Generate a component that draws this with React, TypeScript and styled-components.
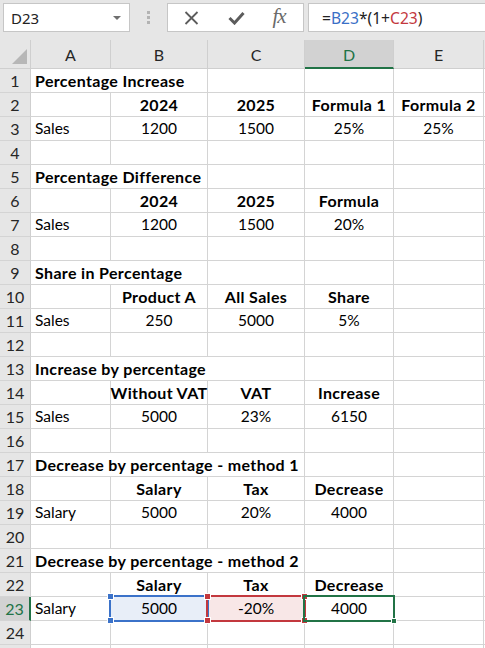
import React from 'react';
import styled, { createGlobalStyle, css } from 'styled-components';

const Global = createGlobalStyle`
  html, body { margin: 0; padding: 0; background: #fff; overflow: hidden; }
  body { font-family: Lato, "Liberation Sans", sans-serif; }
  #root { width: 485px; height: 648px; overflow: hidden; }
`;

const TopBar = styled.div`
  height: 40px;
  background: #e6e6e6;
  display: flex;
  align-items: flex-start;
  padding: 3px 0 0 3px;
  box-sizing: border-box;
`;

const NameBox = styled.div`
  width: 127px;
  height: 29px;
  box-sizing: border-box;
  background: #fff;
  border: 1px solid #c6c6c6;
  display: flex;
  align-items: center;
  padding: 0 8px 0 7px;
  font-family: "Noto Sans", "Open Sans", sans-serif;
  font-size: 15px;
  color: #222;
`;

const DropArrow = styled.span`
  margin-left: auto;
  width: 0;
  height: 0;
  border-left: 4px solid transparent;
  border-right: 4px solid transparent;
  border-top: 4px solid #6f6f6f;
`;

const Grip = styled.div`
  width: 37px;
  height: 29px;
  display: flex;
  flex-direction: column;
  align-items: center;
  justify-content: center;
  gap: 2px;
`;

const Dot = styled.span`
  width: 3px;
  height: 3px;
  background: #b3b3b3;
`;

const FxBox = styled.div`
  width: 137px;
  height: 29px;
  box-sizing: border-box;
  background: #fff;
  border: 1px solid #c6c6c6;
  display: flex;
  align-items: center;
  padding-left: 15px;
`;

const IconSlot = styled.div<{ $w: number }>`
  width: ${p => p.$w}px;
  height: 27px;
  display: flex;
  align-items: center;
  justify-content: center;
`;

const FxText = styled.span`
  font-family: "Liberation Serif", "DejaVu Serif", serif;
  font-style: italic;
  font-size: 21px;
  line-height: 1;
  color: #6a6a6a;
  letter-spacing: -1px;
  margin-top: -2px;
`;

const FormulaInput = styled.div`
  flex: 1;
  height: 29px;
  margin-left: 4px;
  box-sizing: border-box;
  background: #fff;
  border: 1px solid #c6c6c6;
  border-right: none;
  display: flex;
  align-items: center;
  padding-left: 13px;
  font-family: "Noto Sans", "Open Sans", sans-serif;
  font-size: 15.6px;
  color: #222;
  white-space: pre;
`;

const Ref = styled.span<{ $c: string }>`
  color: ${p => p.$c};
`;

const Sheet = styled.div`
  display: grid;
  grid-template-columns: 31px 80px 97px 97px 89px 90px 1fr;
  grid-template-rows: 29px;
  grid-auto-rows: 24px;
  font-family: Lato, "Liberation Sans", sans-serif;
  font-size: 15px;
`;

const Corner = styled.div`
  background: #e6e6e6;
  border-right: 1px solid #cfcfcf;
  border-bottom: 1px solid #cfcfcf;
  display: flex;
  align-items: flex-end;
  justify-content: flex-end;
  padding: 0 3px 4px 0;
  box-sizing: border-box;
`;

const Triangle = styled.span`
  width: 0;
  height: 0;
  border-left: 15px solid transparent;
  border-bottom: 15px solid #b7b7b7;
`;

const ColHead = styled.div<{ $active?: boolean }>`
  background: ${p => (p.$active ? '#d2d2d2' : '#e6e6e6')};
  border-right: 1px solid #cfcfcf;
  border-bottom: ${p => (p.$active ? '2px solid #217346' : '1px solid #cfcfcf')};
  color: ${p => (p.$active ? '#217346' : '#262626')};
  box-sizing: border-box;
  display: flex;
  align-items: center;
  justify-content: center;
  padding-top: 1px;
  font-size: 16px;
`;

const RowHead = styled.div<{ $active?: boolean }>`
  background: ${p => (p.$active ? '#d2d2d2' : '#e6e6e6')};
  border-right: ${p => (p.$active ? '2px solid #217346' : '1px solid #cfcfcf')};
  border-bottom: 1px solid #d4d4d4;
  color: ${p => (p.$active ? '#217346' : '#262626')};
  box-sizing: border-box;
  display: flex;
  align-items: center;
  justify-content: center;
  font-size: 16px;
  padding-bottom: 1px;
`;

type Sel = 'blue' | 'red' | 'green';

const selFill: Record<Sel, string> = { blue: '#e8eef8', red: '#f8e7e7', green: 'transparent' };
const selLine: Record<Sel, string> = { blue: '#3b72c9', red: '#c3383e', green: '#217346' };
const selZ: Record<Sel, number> = { blue: 2, red: 3, green: 4 };

const Cell = styled.div<{ $bold?: boolean; $center?: boolean; $span?: number; $sel?: Sel }>`
  position: relative;
  box-sizing: border-box;
  border-right: 1px solid #d4d4d4;
  border-bottom: 1px solid #d4d4d4;
  display: flex;
  align-items: center;
  justify-content: ${p => (p.$center ? 'center' : 'flex-start')};
  padding-left: ${p => (p.$center ? '0' : '4px')};
  padding-bottom: 1px;
  white-space: nowrap;
  color: #000;
  ${p =>
    p.$bold
      ? css`
          font-weight: 700;
          font-size: 16px;
          letter-spacing: 0.35px;
        `
      : css`
          font-weight: 400;
          font-size: 15.5px;
        `}
  ${p => p.$span && css`grid-column: span ${p.$span};`}
  background: ${p => (p.$sel ? selFill[p.$sel] : 'transparent')};
`;

const Frame = styled.div<{ $sel: Sel }>`
  position: absolute;
  top: -2px;
  left: -2px;
  right: -2px;
  bottom: -2px;
  border: 2px solid ${p => selLine[p.$sel]};
  z-index: ${p => selZ[p.$sel]};
  pointer-events: none;
`;

const Handle = styled.span<{ $sel: Sel; $pos: 'tl' | 'tr' | 'bl' | 'br'; $size?: number }>`
  position: absolute;
  width: ${p => p.$size ?? 5}px;
  height: ${p => p.$size ?? 5}px;
  background: ${p => selLine[p.$sel]};
  border: 1px solid #fff;
  ${p => (p.$pos[0] === 't' ? 'top' : 'bottom')}: -4px;
  ${p => (p.$pos[1] === 'l' ? 'left' : 'right')}: -4px;
`;

type CellData = { t?: string; b?: boolean; c?: boolean; span?: number; sel?: Sel };

const H = (t: string): CellData => ({ t, b: true, c: true });
const V = (t: string): CellData => ({ t, c: true });
const T = (t: string, span: number): CellData => ({ t, b: true, span });
const L = (t: string): CellData => ({ t });

const rows: CellData[][] = [
  [T('Percentage Increase', 2)],
  [{}, H('2024'), H('2025'), H('Formula 1'), H('Formula 2')],
  [L('Sales'), V('1200'), V('1500'), V('25%'), V('25%')],
  [],
  [T('Percentage Difference', 2)],
  [{}, H('2024'), H('2025'), H('Formula')],
  [L('Sales'), V('1200'), V('1500'), V('20%')],
  [],
  [T('Share in Percentage', 2)],
  [{}, H('Product A'), H('All Sales'), H('Share')],
  [L('Sales'), V('250'), V('5000'), V('5%')],
  [],
  [T('Increase by percentage', 3)],
  [{}, H('Without VAT'), H('VAT'), H('Increase')],
  [L('Sales'), V('5000'), V('23%'), V('6150')],
  [],
  [T('Decrease by percentage - method 1', 3)],
  [{}, H('Salary'), H('Tax'), H('Decrease')],
  [L('Salary'), V('5000'), V('20%'), V('4000')],
  [],
  [T('Decrease by percentage - method 2', 3)],
  [{}, H('Salary'), H('Tax'), H('Decrease')],
  [L('Salary'), { t: '5000', c: true, sel: 'blue' }, { t: '-20%', c: true, sel: 'red' }, { t: '4000', c: true, sel: 'green' }],
  [],
];

const COLS = ['A', 'B', 'C', 'D', 'E', ''];
const TOTAL = 6;

function fillRow(r: CellData[]): CellData[] {
  const out: CellData[] = [...r];
  let used = out.reduce((s, c) => s + (c.span ?? 1), 0);
  while (used < TOTAL) {
    out.push({});
    used++;
  }
  return out;
}

function handlesFor(sel: Sel) {
  if (sel === 'green') return [<Handle key="br" $sel={sel} $pos="br" $size={4} />];
  return (['tl', 'tr', 'bl', 'br'] as const).map(p => <Handle key={p} $sel={sel} $pos={p} />);
}

const XIcon = () => (
  <svg width="15" height="14" viewBox="0 0 15 14">
    <path d="M1.5 1 L13.5 13 M13.5 1 L1.5 13" stroke="#5c5c5c" strokeWidth="1.8" fill="none" />
  </svg>
);

const CheckIcon = () => (
  <svg width="17" height="14" viewBox="0 0 17 14">
    <path d="M1.5 7 L6.5 12 L15.5 2" stroke="#5c5c5c" strokeWidth="3" fill="none" />
  </svg>
);

export default function App() {
  return (
    <>
      <Global />
      <TopBar>
        <NameBox>
          D23
          <DropArrow />
        </NameBox>
        <Grip>
          <Dot />
          <Dot />
          <Dot />
        </Grip>
        <FxBox>
          <IconSlot $w={16}>
            <XIcon />
          </IconSlot>
          <IconSlot $w={28} />
          <IconSlot $w={18}>
            <CheckIcon />
          </IconSlot>
          <IconSlot $w={24} />
          <IconSlot $w={20}>
            <FxText>fx</FxText>
          </IconSlot>
        </FxBox>
        <FormulaInput>
          =<Ref $c="#3a6fc6">B23</Ref>*(1+<Ref $c="#c3383e">C23</Ref>)
        </FormulaInput>
      </TopBar>
      <Sheet>
        <Corner>
          <Triangle />
        </Corner>
        {COLS.map((c, i) => (
          <ColHead key={i} $active={c === 'D'}>
            {c}
          </ColHead>
        ))}
        {rows.map((r, ri) => (
          <React.Fragment key={ri}>
            <RowHead $active={ri === 22}>{ri + 1}</RowHead>
            {fillRow(r).map((c, ci) => (
              <Cell key={ci} $bold={c.b} $center={c.c} $span={c.span} $sel={c.sel}>
                {c.t}
                {c.sel && <Frame $sel={c.sel}>{handlesFor(c.sel)}</Frame>}
              </Cell>
            ))}
          </React.Fragment>
        ))}
        <RowHead />
        {fillRow([]).map((_, ci) => (
          <Cell key={`last-${ci}`} />
        ))}
      </Sheet>
    </>
  );
}
